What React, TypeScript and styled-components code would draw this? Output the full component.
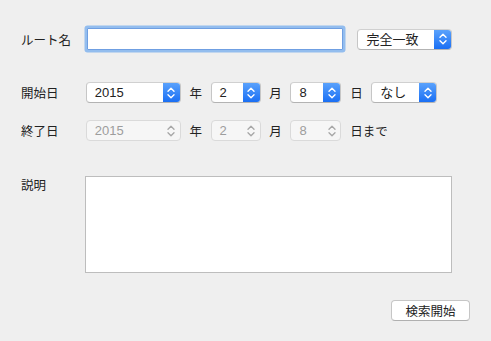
import React from 'react';
import styled, { createGlobalStyle, css } from 'styled-components';

const GlobalStyle = createGlobalStyle`
  html, body {
    margin: 0;
    padding: 0;
    background: #efefef;
  }
  body {
    font-family: "Noto Sans CJK JP", "Liberation Sans", sans-serif;
    font-size: 12.5px;
    color: #222;
  }
`

const Page = styled.div`
  width: 491px;
  height: 341px;
  box-sizing: border-box;
  padding: 28px 21px 0 21px;
  display: flex;
  flex-direction: column;
`

const Row = styled.div<{ $top?: number }>`
  display: flex;
  align-items: center;
  gap: 8.7px;
  margin-top: ${(p) => p.$top ?? 0}px;
`

const Label = styled.div`
  width: 56px;
  flex: none;
  line-height: 21px;
  white-space: nowrap;
`

const Unit = styled.span`
  line-height: 21px;
  white-space: nowrap;
`

const TextField = styled.input`
  width: 256px;
  height: 22px;
  box-sizing: border-box;
  margin: 0 6px 0 1px;
  border: 1px solid #6f9fe2;
  border-radius: 1px;
  box-shadow: 0 0 0 2.5px #93bdee;
  background: #fff;
  outline: none;
`

const PopupBox = styled.div<{ $w: number; $disabled?: boolean }>`
  width: ${(p) => p.$w}px;
  height: 21px;
  box-sizing: border-box;
  display: flex;
  align-items: stretch;
  border-radius: 4px;
  border: 1px solid #c6c6c6;
  border-top-color: #d0d0d0;
  border-bottom-color: #b3b3b3;
  background: #fff;
  overflow: hidden;
  ${(p) =>
    p.$disabled &&
    css`
      background: #f6f6f6;
      border-color: #dadada;
      color: #9d9d9d;
    `}
`

const PopupText = styled.div`
  flex: 1;
  padding-left: 8px;
  line-height: 19px;
  font-family: "Liberation Sans", "Noto Sans CJK JP", sans-serif;
  font-size: 13px;
  white-space: nowrap;
`

const Stepper = styled.div<{ $disabled?: boolean }>`
  width: 17px;
  flex: none;
  display: flex;
  align-items: center;
  justify-content: center;
  background: ${(p) => (p.$disabled ? 'transparent' : 'linear-gradient(#5aa2fc, #1a6ff4)')};
  color: ${(p) => (p.$disabled ? '#a8a8a8' : '#fff')};
`

const TextArea = styled.textarea`
  width: 367px;
  height: 97px;
  box-sizing: border-box;
  border: 1px solid #bdbdbd;
  background: #fff;
  resize: none;
  outline: none;
  margin: 0;
`

const DescRow = styled.div`
  display: flex;
  align-items: flex-start;
  margin-top: 35px;
`

const DescLabel = styled(Label)`
  width: 64px;
  line-height: 18px;
`

const Footer = styled.div`
  display: flex;
  justify-content: flex-end;
  margin-top: 27px;
`

const PushButton = styled.button`
  width: 79px;
  height: 21px;
  box-sizing: border-box;
  border: 1px solid #c6c6c6;
  border-bottom-color: #b0b0b0;
  border-radius: 4px;
  background: #fff;
  font-family: "Noto Sans CJK JP", sans-serif;
  font-size: 12.5px;
  color: #222;
  padding: 0;
  line-height: 19px;
`

const Arrows = () => (
  <svg width="8" height="12" viewBox="0 0 8 12" fill="none" stroke="currentColor" strokeWidth="1.4" strokeLinecap="round" strokeLinejoin="round">
    <path d="M1 4.2 L4 1.2 L7 4.2" />
    <path d="M1 7.8 L4 10.8 L7 7.8" />
  </svg>
)

const Popup: React.FC<{ value: string; width: number; disabled?: boolean }> = ({ value, width, disabled }) => (
  <PopupBox $w={width} $disabled={disabled}>
    <PopupText>{value}</PopupText>
    <Stepper $disabled={disabled}>
      <Arrows />
    </Stepper>
  </PopupBox>
)

const App = () => {
  return (
    <Page>
      <GlobalStyle />
      <Row>
        <Label>ルート名</Label>
        <TextField />
        <Popup value="完全一致" width={95} />
      </Row>
      <Row $top={32}>
        <Label>開始日</Label>
        <Popup value="2015" width={95} />
        <Unit>年</Unit>
        <Popup value="2" width={50} />
        <Unit>月</Unit>
        <Popup value="8" width={51} />
        <Unit>日</Unit>
        <Popup value="なし" width={66} />
      </Row>
      <Row $top={17}>
        <Label>終了日</Label>
        <Popup value="2015" width={95} disabled />
        <Unit>年</Unit>
        <Popup value="2" width={50} disabled />
        <Unit>月</Unit>
        <Popup value="8" width={51} disabled />
        <Unit>日まで</Unit>
      </Row>
      <DescRow>
        <DescLabel>説明</DescLabel>
        <TextArea />
      </DescRow>
      <Footer>
        <PushButton>検索開始</PushButton>
      </Footer>
    </Page>
  );
};

export default App;
